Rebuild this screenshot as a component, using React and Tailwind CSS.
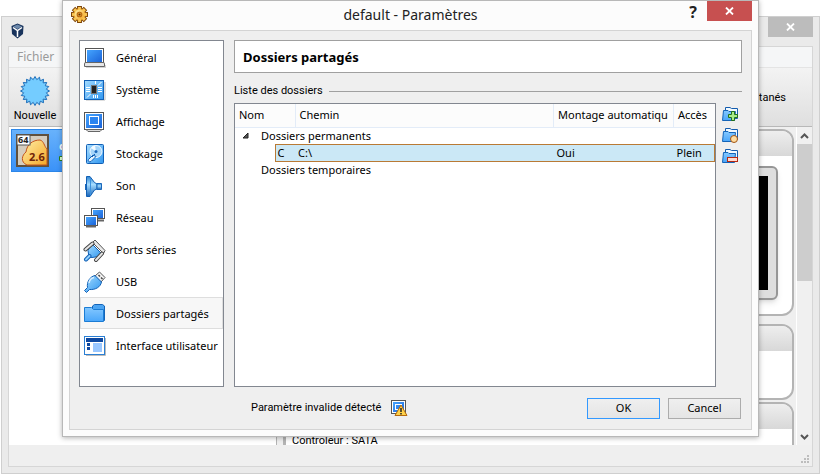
import clsx from 'clsx';

const icons = {
    general: (
        <>
            <path d="M3 18H23V21H3Z" fill="#aaa" opacity=".5" />
            <rect x="2.5" y="1.5" width="18" height="14" fill="#fff" stroke="#555" />
            <rect x="4" y="3" width="15" height="12" fill="url(#blue)" />
            <path d="M2 15.5H21L21.5 17V19.5H1.5V17Z" fill="#e6e6e6" stroke="#666" />
        </>
    ),
    system: (
        <>
            <path d="M3 21H22V3" fill="none" stroke="#bbb" />
            <rect x="1.5" y="1.5" width="19" height="19" fill="url(#sky)" stroke="#1260b5" />
            <rect x="8.5" y="6.5" width="5" height="8" fill="#222" stroke="#777" />
            <path d="M3 8.5H7M3 10.5H7M3 12.5H7M15 8.5H19M15 10.5H19M15 12.5H19M10.5 16V19M12.5 16V19M14.5 16V19M12.5 2V5M18.5 3L15 6.5M4 18.5L7.5 15" stroke="#fff" />
        </>
    ),
    display: (
        <>
            <rect x="1.5" y="1.5" width="19" height="17" fill="#fff" stroke="#555" />
            <rect x="3" y="3" width="16" height="14" fill="url(#blue)" />
            <rect x="6.5" y="5.5" width="9" height="8" fill="#2b84f0" stroke="#fff" />
            <path d="M3 18.5H19L17 20.5H5Z" fill="#ddd" stroke="#666" />
        </>
    ),
    storage: (
        <>
            <rect x="3.5" y="1.5" width="17" height="19" rx="1" fill="url(#sky)" stroke="#1260b5" />
            <circle cx="13" cy="8.5" r="6" fill="#a5d5fa" stroke="#f3faff" />
            <path d="M13 8.5L8 5A6 6 0 0 1 12 2.500Z" fill="#f3faff" />
            <circle cx="13" cy="8.5" r="1.5" fill="#1b68bb" />
            <path d="M5.5 16.5L10 12L13 13.500L8 18.5C6.5 19.5 4.5 18.5 5.5 16.5Z" fill="#e5f4ff" stroke="#1260b5" />
            <path d="M12 11L9 14" stroke="#1260b5" />
        </>
    ),
    sound: (
        <>
            <path d="M3.5 1.5H7L11.5 7.5L14 9V14L11.500 15L7 21.5H3.5Z" fill="url(#horn)" stroke="#1260b5" />
            <path d="M14 8.5H18.5V14.5H14Z" fill="url(#horn)" stroke="#1b68bb" />
            <path d="M7.500 3V20" stroke="#3d92dd" />
            <path d="M2.500 9V15" stroke="#1b68bb" />
        </>
    ),
    network: (
        <>
            <rect x="8.5" y="1.5" width="13" height="10" fill="#fff" stroke="#555" />
            <rect x="10" y="3" width="10" height="8" fill="url(#blue)" />
            <path d="M12 13.5H21" stroke="#666" strokeWidth="2" />
            <rect x="1.5" y="8.5" width="13" height="10" fill="#fff" stroke="#555" />
            <rect x="3" y="10" width="10" height="8" fill="url(#blue)" />
            <path d="M3 19.5H13" stroke="#666" strokeWidth="2" />
        </>
    ),
    serial: (
        <>
            <path d="M9.5 3.5L12 1L22 11.5L20.5 14.5Z" fill="#e9e9e9" stroke="#555" />
            <path d="M9 5L19 15L15.5 17.5L9 18.500L6 18L5 11.500L7 7Z" fill="url(#sky)" stroke="#1260b5" />
            <path d="M9.500 4.500L2.500 10.500M19 14.500L13 21" stroke="#444" strokeWidth="4" strokeLinecap="round" />
            <path d="M9.500 4.500L2.500 10.500M19 14.500L13 21" stroke="#e5e5e5" strokeWidth="2" strokeLinecap="round" />
            <path d="M6.500 17L3 20.500" stroke="#1260b5" strokeWidth="4" strokeLinecap="round" />
            <path d="M6.500 17L3 20.500" stroke="#8fd0ff" strokeWidth="2" strokeLinecap="round" />
        </>
    ),
    usb: (
        <>
            <path d="M12 5L16.500 1L22 6.500L18 11Z" fill="#f4f4f4" stroke="#555" />
            <path d="M15.500 4L17 5.500M18 6.500L19.500 8" stroke="#444" strokeWidth="1.500" />
            <path d="M12 4.5L18.5 11C17.500 16 12.500 19 6.500 18.500L3.500 21.500L1.500 19.500L4.500 16.500C3.500 11 7 5.500 12 4.5Z" fill="url(#sky)" stroke="#1260b5" />
            <path d="M6 12C6.500 9 8.500 7 11 6.500" fill="none" stroke="#d9f0ff" strokeWidth="1.500" />
        </>
    ),
    folder: (
        <>
            <path d="M9.5 5.500V3L11.500 1.5H19.5L21.5 3V17.500H9.5Z" fill="#4ba4f2" stroke="#1464b8" />
            <path d="M1.5 4.5H8.500L10.500 6.5H20.5V18.5H1.5Z" fill="url(#folder)" stroke="#1b7cd4" />
        </>
    ),
    ui: (
        <>
            <path d="M3 20.500H22.500V3" fill="none" stroke="#bbb" />
            <rect x="1.5" y="1.5" width="20" height="18" fill="#fff" stroke="#2a7fd4" />
            <rect x="3" y="3" width="17" height="4" fill="#0d48a0" />
            <path d="M4 8H7V11H4ZM4 12H7V15H4Z" fill="#0d48a0" />
            <rect x="10" y="8" width="9" height="9" fill="#99c7ff" />
        </>
    ),
};

const categories = [
    { id: 'general', label: 'Général' },
    { id: 'system', label: 'Système' },
    { id: 'display', label: 'Affichage' },
    { id: 'storage', label: 'Stockage' },
    { id: 'sound', label: 'Son' },
    { id: 'network', label: 'Réseau' },
    { id: 'serial', label: 'Ports séries' },
    { id: 'usb', label: 'USB' },
    { id: 'folder', label: 'Dossiers partagés' },
    { id: 'ui', label: 'Interface utilisateur' },
];

function Gradients() {
    return (
        <svg width="0" height="0" className="absolute" aria-hidden="true">
            <defs>
                <linearGradient id="blue" x1="0" y1="0" x2="1" y2="1">
                    <stop offset="0" stopColor="#45a5ff" />
                    <stop offset="1" stopColor="#1b63d8" />
                </linearGradient>
                <linearGradient id="sky" x1="0" y1="0" x2="1" y2="1">
                    <stop offset="0" stopColor="#a5dcff" />
                    <stop offset="1" stopColor="#2f96f0" />
                </linearGradient>
                <linearGradient id="folder" x1="0" y1="0" x2="0" y2="1">
                    <stop offset="0" stopColor="#84c8ff" />
                    <stop offset="1" stopColor="#4aa6fa" />
                </linearGradient>
                <linearGradient id="horn" x1="0" y1="0" x2="0" y2="1">
                    <stop offset="0" stopColor="#2d83d0" />
                    <stop offset=".4" stopColor="#a6dcff" />
                    <stop offset="1" stopColor="#1763b8" />
                </linearGradient>
                <linearGradient id="gold" x1="0" y1="0" x2="1" y2="1">
                    <stop offset="0" stopColor="#fff0a8" />
                    <stop offset="1" stopColor="#f5a728" />
                </linearGradient>
            </defs>
        </svg>
    );
}

function Cross() {
    return (
        <svg width="9" height="8" viewBox="0 0 9 8" aria-hidden="true">
            <path d="M1 .5L8 7.5M8 .5L1 7.5" stroke="#fff" strokeWidth="1.8" />
        </svg>
    );
}

function Gear() {
    const teeth = [0, 45, 90, 135];
    return (
        <svg width="17" height="17" viewBox="0 0 16 16" aria-hidden="true">
            {teeth.map((angle) => (
                <rect key={angle} x="6.2" y=".5" width="3.6" height="15" fill="#f6b63c" stroke="#7d450a" transform={`rotate(${angle} 8 8)`} />
            ))}
            <circle cx="8" cy="8" r="5.8" fill="#f0a830" stroke="#9a5a10" strokeWidth=".5" />
            {teeth.map((angle) => (
                <rect key={angle} x="6.7" y="1" width="2.6" height="14" fill="#f9c552" transform={`rotate(${angle} 8 8)`} />
            ))}
            <circle cx="8" cy="8" r="4.5" fill="url(#gold)" />
            <circle cx="8" cy="8" r="2.2" fill="#e89a2c" stroke="#b8690f" />
            <circle cx="8" cy="8" r="1" fill="#5c340a" />
        </svg>
    );
}

function Starburst() {
    const points = Array.from({ length: 40 }, (_, i) => {
        const r = i % 2 ? 11.5 : 14.5;
        const a = (i * Math.PI) / 20;
        return `${15 + r * Math.sin(a)},${15 - r * Math.cos(a)}`;
    }).join(' ');
    return (
        <svg width="30" height="30" viewBox="0 0 30 30" aria-hidden="true">
            <polygon points={points} fill="#74ccff" stroke="#1b6cb8" />
        </svg>
    );
}

function FolderAction({ label, children }) {
    return (
        <button type="button" aria-label={label} className="block">
            <svg width="17" height="17" viewBox="0 0 17 17" aria-hidden="true">
                <path d="M3.5 5V1.5H8L9.5 2.5H15.5V12.5H3.5Z" fill="#f2faff" stroke="#145cae" />
                <path d="M.5 14.5L1.5 4.5H6L7 5.5H13.5L12.5 14.5Z" fill="url(#folder)" stroke="#1464b8" />
                {children}
            </svg>
        </button>
    );
}

function Card({ className, children }) {
    return (
        <section className={clsx('overflow-hidden border-2 border-[#b4b4b4] bg-white', className)}>
            <div className="h-[25px] bg-linear-to-b from-[#eeeeee] to-[#d8d8d8]" />
            {children}
        </section>
    );
}

function MainWindow() {
    return (
        <div className="absolute top-4 right-px bottom-px left-px flex flex-col border border-[#cfcfcf] bg-[#eaeaea] px-1.5 pb-1.5">
            <div className="flex h-[29px] shrink-0 items-start justify-between">
                <svg className="mt-1.5 ml-[3px]" width="13" height="16" viewBox="0 0 13 16" aria-label="VirtualBox">
                    <path d="M6.5 .5L12.5 3L12 11L6.5 15.5L1 11L.5 3Z" fill="#18335c" />
                    <path d="M6.5 1.5L11 3.5L6.5 6L2 3.5Z" fill="#6d89ab" />
                    <path d="M2 4.500L6.5 7.500L11 4.500M6.5 8V14" fill="none" stroke="#fff" strokeWidth="1.5" />
                </svg>
                <div className="flex items-start">
                    <svg className="mt-1.5" width="16" height="9" viewBox="0 0 16 9" aria-hidden="true">
                        <path d="M0 0H7V9H5V2H2V9H0Z" fill="#222" />
                    </svg>
                    <button type="button" aria-label="Fermer la fenêtre" className="flex h-5 w-[45px] items-center justify-center bg-[#bcbcbc]">
                        <Cross />
                    </button>
                </div>
            </div>
            <div className="flex min-h-0 flex-1 flex-col border border-[#d6d6d6] bg-[#efefef]">
                <nav className="flex h-[21px] shrink-0 items-center border-b border-[#e4e4e4] bg-[#f5f6f7] px-2">
                    <button type="button" className="text-xs text-[#9a9a9a]">Fichier</button>
                </nav>
                <div className="flex h-[59px] shrink-0 justify-between border-b border-[#b8b8b8] bg-linear-to-b from-[#f3f3f3] to-[#dfdfdf] font-[Roboto,sans-serif]">
                    <button type="button" className="flex w-[52px] flex-col items-center gap-0.5 pt-2">
                        <Starburst />
                        <span className="leading-4">Nouvelle</span>
                    </button>
                    <button type="button" className="flex items-end pr-[26px] pb-5 leading-4">Instantanés</button>
                </div>
                <div className="flex min-h-0 flex-1">
                    <div className="w-[268px] shrink-0 border-r border-[#b4b4b4] bg-white p-0.5">
                        <div className="flex h-[43px] items-center gap-2.5 border border-[#2c86e8] bg-linear-to-b from-[#68b2fb] to-[#3a92f8] pl-1">
                            <svg width="33" height="33" viewBox="0 0 33 33" className="shrink-0" aria-hidden="true">
                                <rect x="1" y="1" width="31" height="31" fill="#d5cdbf" stroke="#60503c" strokeWidth="2" />
                                <path d="M11 31C4 28 6 21 10 18C11 10 17 6 24 6C28 7 28 12 31 15V31Z" fill="url(#gold)" stroke="#c4541a" />
                                <rect x="1" y="1" width="13" height="10" fill="#fff" stroke="#555" />
                                <text x="2" y="9" fontSize="9" fontWeight="700" fill="#222">64</text>
                                <text x="13" y="27" fontSize="11" fontWeight="700" fill="#712407">2.6</text>
                            </svg>
                            <div className="leading-4 font-bold text-white">
                                <div>default</div>
                                <svg width="14" height="9" viewBox="0 0 14 9" aria-hidden="true">
                                    <path d="M.5 2.5H7V.5L13 4.5L7 8V6.5H.5Z" fill="#d8ffd0" stroke="#28801c" />
                                </svg>
                            </div>
                        </div>
                    </div>
                    <div className="w-1.5 shrink-0" />
                    <div className="min-w-0 flex-1 overflow-hidden border-l border-[#b4b4b4] pt-0.5 pr-0.5">
                        <Card className="h-[187px] rounded-xl">
                            <div className="mt-2.5 mr-3.5 ml-auto h-[134px] w-[180px] rounded-md border-2 border-[#969696] bg-[#dedede] p-2 shadow-md">
                                <div className="h-full bg-black" />
                            </div>
                        </Card>
                        <Card className="mt-2 h-[76px] rounded-xl" />
                        <Card className="mt-0.5 h-[90px] rounded-t-xl">
                            <p className="pt-1 pl-1.5 font-[Roboto,sans-serif] leading-4">Controleur : SATA</p>
                        </Card>
                    </div>
                    <div className="flex w-4 shrink-0 flex-col items-center border-l border-white bg-[#f0f0f0]">
                        <svg width="15" height="17" viewBox="0 0 15 17" aria-hidden="true">
                            <path d="M4 11L7.5 7.5L11 11" fill="none" stroke="#555" strokeWidth="2" />
                        </svg>
                        <div className="mb-auto h-[43%] w-full bg-[#cdcdcd]" />
                        <svg width="15" height="17" viewBox="0 0 15 17" aria-hidden="true">
                            <path d="M4 7L7.5 10.5L11 7" fill="none" stroke="#555" strokeWidth="2" />
                        </svg>
                    </div>
                </div>
                <footer className="flex h-[21px] shrink-0 items-end justify-end px-[3px] pb-[3px]">
                    <svg width="8" height="8" viewBox="0 0 8 8" aria-hidden="true">
                        <path d="M6 0H8V2H6ZM3 3H5V5H3ZM6 3H8V5H6ZM0 6H2V8H0ZM3 6H5V8H3ZM6 6H8V8H6Z" fill="#bdbdbd" />
                    </svg>
                </footer>
            </div>
        </div>
    );
}

function CategoryList() {
    return (
        <ul className="w-[145px] shrink-0 border border-[#828790] bg-white">
            {categories.map(({ id, label }) => (
                <li key={id}>
                    <button
                        type="button"
                        className={clsx(
                            'flex h-8 w-full items-center gap-2.5 border px-0.5 pt-0.5 text-left whitespace-nowrap',
                            id === 'folder' ? 'border-[#dedede] bg-[#f7f7f7]' : 'border-transparent'
                        )}
                    >
                        <svg width="23" height="23" viewBox="0 0 23 23" className="shrink-0" aria-hidden="true">
                            {icons[id]}
                        </svg>
                        {label}
                    </button>
                </li>
            ))}
        </ul>
    );
}

function FolderTable() {
    return (
        <div className="min-w-0 flex-1 overflow-hidden border border-[#828790] bg-white">
            <table className="w-full table-fixed border-collapse text-left">
                <colgroup>
                    <col className="w-10" />
                    <col className="w-5" />
                    <col />
                    <col className="w-[120px]" />
                    <col className="w-[41px]" />
                </colgroup>
                <thead>
                    <tr className="h-[23px] border-b border-[#e3ecf8] bg-[#fcfcfc]">
                        <th colSpan="2" className="border-r border-[#e3ecf8] pl-1 font-normal">Nom</th>
                        <th className="border-r border-[#e3ecf8] pl-1 font-normal">Chemin</th>
                        <th className="border-r border-[#e3ecf8] pl-1 font-normal whitespace-nowrap">Montage automatiqu</th>
                        <th className="pl-1 font-normal">Accès</th>
                    </tr>
                </thead>
                <tbody>
                    <tr className="h-[17px] leading-4">
                        <td colSpan="5">
                            <div className="flex items-center gap-3 pl-[7px]">
                                <svg width="7" height="7" viewBox="0 0 7 7" aria-hidden="true">
                                    <path d="M6 1V6H1Z" fill="#555" stroke="#222" />
                                </svg>
                                Dossiers permanents
                            </div>
                        </td>
                    </tr>
                    <tr className="h-[17px] leading-[15px]">
                        <td />
                        <td className="border-y border-l border-[#b97a35] bg-[#cbe8f6] pl-0.5">C</td>
                        <td className="border-y border-[#b97a35] bg-[#cbe8f6] pl-[3px]">C:\</td>
                        <td className="border-y border-[#b97a35] bg-[#cbe8f6] pl-[3px]">Oui</td>
                        <td className="border-y border-r border-[#b97a35] bg-[#cbe8f6] pl-[3px]">Plein</td>
                    </tr>
                    <tr className="h-[17px] leading-4">
                        <td colSpan="5" className="pl-[26px]">Dossiers temporaires</td>
                    </tr>
                </tbody>
            </table>
        </div>
    );
}

function SettingsDialog() {
    return (
        <div role="dialog" aria-labelledby="dialog-title" className="absolute top-0 right-[62px] bottom-[38px] left-[62px] flex flex-col border border-[#b8b8b8] bg-[#fcfcfc] px-1.5 pb-1.5 shadow-[0_1px_5px_rgba(0,0,0,0.3)]">
            <header className="grid h-[29px] shrink-0 grid-cols-[1fr_auto_1fr] items-start">
                <div className="pt-[5px] pl-0.5">
                    <Gear />
                </div>
                <h1 id="dialog-title" className="pt-1 text-sm text-[#222]">default - Paramètres</h1>
                <div className="flex justify-end gap-2.5">
                    <button type="button" className="h-[22px] text-base leading-[22px] font-bold text-[#222]">?</button>
                    <button type="button" aria-label="Fermer" className="flex h-5 w-[45px] items-center justify-center bg-[#c75050]">
                        <Cross />
                    </button>
                </div>
            </header>
            <div className="flex min-h-0 flex-1 flex-col border border-[#d4d4d4] bg-[#efefef] px-[9px] pt-[9px]">
                <main className="flex min-h-0 flex-1 gap-2.5">
                    <CategoryList />
                    <div className="flex min-w-0 flex-1 flex-col">
                        <h2 className="flex h-[33px] shrink-0 items-center border border-[#a0a0a0] bg-white px-2 pt-0.5 text-[13px] font-bold">Dossiers partagés</h2>
                        <div className="flex h-[30px] shrink-0 items-center gap-1.5 pt-1.5 font-[Roboto,sans-serif]">
                            <h3>Liste des dossiers</h3>
                            <div className="h-px flex-1 bg-[#a0a0a0]" />
                        </div>
                        <div className="flex min-h-0 flex-1 gap-1.5">
                            <FolderTable />
                            <div className="flex w-5 shrink-0 flex-col gap-1 pt-[3px]">
                                <FolderAction label="Ajouter un dossier">
                                    <path d="M9.5 5.5H12.5V8.5H15.5V11.5H12.5V14.5H9.5V11.5H6.5V8.5H9.5Z" fill="#a9ec88" stroke="#22701a" />
                                </FolderAction>
                                <FolderAction label="Modifier le dossier">
                                    <circle cx="12" cy="12" r="3.5" fill="#ffdda0" stroke="#a05214" />
                                </FolderAction>
                                <FolderAction label="Supprimer le dossier">
                                    <rect x="5.5" y="9.5" width="10" height="4" fill="#ffdcd0" stroke="#b42812" />
                                </FolderAction>
                            </div>
                        </div>
                    </div>
                </main>
                <footer className="flex h-[42px] shrink-0 items-center justify-between pr-px pl-[172px]">
                    <div className="flex items-center gap-2.5">
                        <span className="font-[Roboto,sans-serif]">Paramètre invalide détecté</span>
                        <svg width="17" height="17" viewBox="0 0 17 17" aria-hidden="true">
                            <rect x=".5" y=".5" width="14" height="13" fill="#fff" stroke="#555" />
                            <rect x="2" y="2" width="11" height="10" fill="url(#blue)" />
                            <rect x="4.5" y="4.5" width="6" height="5" fill="none" stroke="#fff" />
                            <path d="M10 5L16 15.5H4Z" fill="#ffd24a" stroke="#b56a0c" />
                            <path d="M10 8V12M10 13V14.5" stroke="#222" strokeWidth="1.5" />
                        </svg>
                    </div>
                    <div className="flex gap-2">
                        <button type="button" className="h-[21px] w-[73px] border border-[#3399ff] bg-linear-to-b from-[#efefef] to-[#e5e5e5]">OK</button>
                        <button type="button" className="h-[21px] w-[73px] border border-[#acacac] bg-linear-to-b from-[#efefef] to-[#e5e5e5]">Cancel</button>
                    </div>
                </footer>
            </div>
        </div>
    );
}

export default function App() {
    return (
        <div className="relative h-screen overflow-hidden bg-white font-['Noto_Sans','Open_Sans',sans-serif] text-[11px] text-black">
            <Gradients />
            <MainWindow />
            <SettingsDialog />
        </div>
    );
}
